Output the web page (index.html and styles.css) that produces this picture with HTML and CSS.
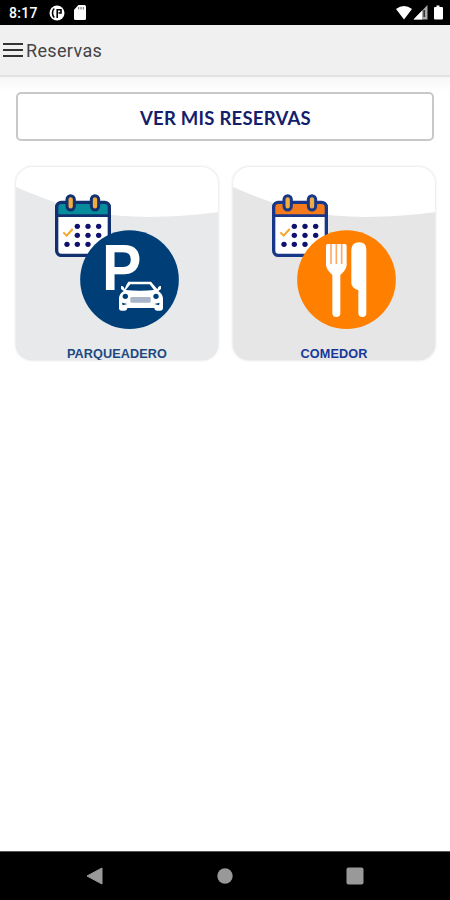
FILE: index.html
```html
<!DOCTYPE html>
<html lang="es">

<head>
    <meta charset="UTF-8" />
    <meta name="viewport" content="width=device-width, initial-scale=1.0" />
    <title>Reservas</title>
    <link rel="stylesheet" href="styles.css">
</head>

<body>
    <div class="status-bar">
        <span class="time">8:17</span>
        <svg class="notification" width="16" height="16" viewBox="0 0 16 16">
            <circle cx="8" cy="8" r="7.500" fill="#fff" />
            <path d="M5.300 3.500Q3.500 5 3.500 8T5.300 12.500M8.200 13V4.700H12V8H9.500" fill="none" stroke="#000" stroke-width="1.600" />
        </svg>
        <svg width="12" height="15" viewBox="0 0 12 15">
            <path d="M4.5 0H10.5Q12 0 12 1.5V13.5Q12 15 10.5 15H1.5Q0 15 0 13.5V4.7Z" fill="#fff" />
            <path d="M4.7 2v2.6M7 2v2.6M9.3 2v2.6" stroke="#777" stroke-width="1.1" />
        </svg>
        <svg class="signals" width="48" height="16" viewBox="0 0 48 16">
            <path d="M0 4Q8-2 16 4L8 14.5Z" fill="#fff" />
            <path d="M17.5 14.5L31.5 0V14.5Z" fill="#aaa" />
            <path d="M17.5 14.5L26 5.7V14.5Z" fill="#fff" />
            <path d="M28.2 5v7" stroke="#333" stroke-width="1.7" />
            <path d="M39 2h1.500V.5h3V2H46q1 0 1 1v10.5q0 1-1 1h-7q-1 0-1-1V3q0-1 1-1z" fill="#fff" />
        </svg>
    </div>

    <header class="toolbar">
        <svg class="menu" width="20" height="16" viewBox="0 0 20 16">
            <path d="M0 2h20M0 8h20M0 14h20" stroke="#333" stroke-width="2" />
        </svg>
        <span class="title">Reservas</span>
    </header>

    <main class="content">
        <button class="my-bookings">VER MIS RESERVAS</button>
        <div class="cards">
            <a class="card parking">
                <svg width="202" height="193" viewBox="33 36 606 579">
                    <path d="M33 36H639V172C420 198 260 188 125 133Q75 115 33 96Z" fill="#fff" />
                    <g id="calendar">
                        <rect x="155" y="142" width="158" height="159" rx="14" fill="#fff" />
                        <path class="calendar-top" d="M155 182V156Q155 142 169 142H299Q313 142 313 156V182Z" />
                        <rect x="155" y="142" width="158" height="159" rx="14" fill="none" stroke="var(--line)" stroke-width="10" />
                        <path d="M155 182H313" stroke="var(--line)" stroke-width="8" />
                        <rect x="186" y="122" width="22" height="43" rx="11" fill="#efac43" stroke="var(--line)" stroke-width="9" />
                        <rect x="259" y="122" width="22" height="43" rx="11" fill="#efac43" stroke="var(--line)" stroke-width="9" />
                        <g fill="#10106f">
                            <circle cx="217" cy="214" r="8" />
                            <circle cx="249" cy="214" r="8" />
                            <circle cx="281" cy="214" r="8" />
                            <circle cx="217" cy="241" r="8" />
                            <circle cx="249" cy="241" r="8" />
                            <circle cx="281" cy="241" r="8" />
                            <circle cx="186" cy="268" r="8" />
                            <circle cx="217" cy="268" r="8" />
                            <circle cx="249" cy="268" r="8" />
                        </g>
                        <path d="M175 232L185 242L203 222" fill="none" stroke="#f7a629" stroke-width="6" />
                    </g>
                    <circle cx="373.500" cy="374" r="148" fill="#003e78" />
                    <text class="letter" transform="translate(291 405) scale(.92 1)">P</text>
                    <!-- car -->
                    <path d="M370 380H438L452 397L457 403Q460 391 468 393V402L460 408Q472 416 474 429V458Q474 467 465 467H457Q449 467 448 459H367Q366 467 358 467H350Q342 467 342 459V429Q343 416 356 408L348 402V393Q356 391 359 403L364 390Z" fill="#fff" stroke="#003e78" stroke-width="5" paint-order="stroke" />
                    <path d="M376 388H434L447 405Q405 410 362 405Z" fill="#003e78" />
                    <circle cx="361" cy="424" r="8" fill="#003e78" />
                    <circle cx="453" cy="424" r="8" fill="#003e78" />
                    <path d="M351 443l16 4-14 4zM464 443l-16 4 14 4z" fill="#003e78" />
                    <rect x="376" y="426" width="61" height="17" rx="4" fill="#a9b4c8" />
                    <text class="label" x="336" y="608">PARQUEADERO</text>
                </svg>
            </a>
            <a class="card dining">
                <svg width="202" height="193" viewBox="33 36 606 579">
                    <path d="M33 36H639V172C420 198 260 188 125 133Q75 115 33 96Z" fill="#fff" />
                    <use href="#calendar" />
                    <circle cx="373.500" cy="374" r="148" fill="#ff7f00" />
                    <!-- fork and knife -->
                    <path d="M312 272Q312 267 317 267H369Q374 267 374 272V330Q374 343 355 360V475Q355 486 343 486Q331 486 331 475V360Q312 343 312 330Z" fill="#fff" />
                    <path d="M327 267V327M343 267V327M359 267V327" stroke="#ffab66" stroke-width="5" />
                    <path d="M388 283Q390 262 411 262Q433 262 433 283V475Q433 486 421 486Q409 486 409 475V406Q388 399 388 385Z" fill="#fff" />
                    <text class="label" x="336" y="608">COMEDOR</text>
                </svg>
            </a>
        </div>
    </main>

    <nav class="nav-bar">
        <svg width="18" height="18" viewBox="0 0 18 18">
            <path d="M1 9L16 1V17Z" fill="#999" stroke="#999" stroke-linejoin="round" />
        </svg>
        <svg width="18" height="18" viewBox="0 0 18 18">
            <circle cx="9" cy="9" r="7.700" fill="#999" />
        </svg>
        <svg width="18" height="18" viewBox="0 0 18 18">
            <rect x=".5" y=".5" width="17" height="17" rx="2" fill="#999" />
        </svg>
    </nav>
</body>

</html>
```
FILE: styles.css
```css
body {
    display: flex;
    flex-direction: column;
    height: 100vh;
    margin: 0;
    background-color: #fff;
    font-family: Roboto, sans-serif;
}

svg {
    display: block;
    flex-shrink: 0;
}

.status-bar {
    display: flex;
    align-items: center;
    height: 25px;
    padding: 0 6px 0 9px;
    box-sizing: border-box;
    background-color: #000;
    color: #fff;
}

.time {
    width: 40px;
    font-size: 14px;
    font-weight: 500;
    letter-spacing: 0.3px;
    padding-top: 1px;
}

.notification {
    margin-right: 9px;
}

.signals {
    margin-left: auto;
}

.toolbar {
    display: flex;
    align-items: center;
    gap: 3px;
    height: 52px;
    padding-left: 3px;
    box-sizing: border-box;
    background-color: #f0f0f0;
    border-bottom: 2px solid #e2e2e2;
}

.title {
    font-size: 18px;
    letter-spacing: 0.35px;
    color: #444;
    padding-top: 1px;
}

.content {
    flex: 1;
    padding: 15px 15px 0 16px;
    background: linear-gradient(#f6f6f6, #fff 14px);
}

.my-bookings {
    display: block;
    width: 418px;
    height: 49px;
    padding: 2px 0 0 1px;
    border: 2px solid #c8c8c8;
    border-radius: 5px;
    background-color: #fff;
    font-family: Lato, sans-serif;
    font-size: 18.5px;
    font-weight: bold;
    letter-spacing: 0.25px;
    color: #14206c;
}

.cards {
    display: flex;
    gap: 15px;
    margin-top: 26px;
}

.card {
    width: 202px;
    height: 193px;
    border-radius: 16px;
    overflow: hidden;
    box-shadow: 0 0 3px rgba(0, 0, 0, 0.18);
}

.parking {
    --line: #103070;
    --top: #078c9c;
    --label: #204880;
    background-color: #e7e9eb;
}

.dining {
    --line: #193789;
    --top: #f57a1c;
    --label: #16389a;
    background-color: #e6e6e6;
}

.calendar-top {
    fill: var(--top);
}

.letter {
    font: bold 193px "Liberation Sans", sans-serif;
    fill: #fff;
}

.label {
    font: bold 38px "Liberation Sans", sans-serif;
    letter-spacing: 0.3px;
    text-anchor: middle;
    fill: var(--label);
}

.nav-bar {
    display: flex;
    justify-content: space-between;
    align-items: center;
    height: 49px;
    padding: 0 86px;
    box-sizing: border-box;
    background-color: #000;
    border-top: 1px solid #555;
}
```
